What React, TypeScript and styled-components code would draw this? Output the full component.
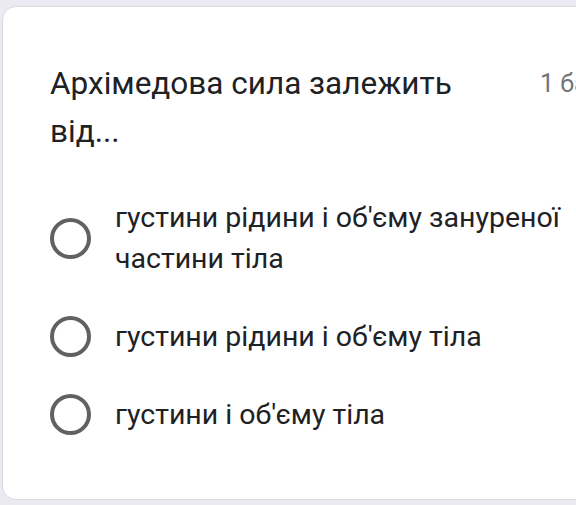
import React from "react";
import styled, { createGlobalStyle } from "styled-components";

const GlobalStyle = createGlobalStyle`
  html, body {
    margin: 0;
    padding: 0;
    background: #ebeaf2;
    font-family: Roboto, "Noto Sans", Arial, sans-serif;
    overflow: hidden;
  }
`;

const Page = styled.div`
  width: 576px;
  height: 505px;
  padding: 6px 0 0 2px;
  box-sizing: border-box;
  overflow: hidden;
`;

const Card = styled.div`
  width: 620px;
  height: 494px;
  box-sizing: border-box;
  background: #fff;
  border: 1px solid #dadce0;
  border-radius: 14px;
  padding: 53px 0 0 47px;
`;

const Header = styled.div`
  display: flex;
  align-items: flex-start;
`;

const Question = styled.div`
  width: 470px;
  font-size: 31.5px;
  line-height: 48px;
  color: #202124;
`;

const Points = styled.div`
  font-size: 25px;
  line-height: 48px;
  color: #70757a;
  white-space: nowrap;
  margin-left: 20px;
`;

const Options = styled.div`
  display: flex;
  flex-direction: column;
  gap: 37px;
  margin-top: 41px;
`;

const Option = styled.label`
  display: flex;
  align-items: center;
  gap: 24px;
`;

const Radio = styled.span`
  width: 41px;
  height: 41px;
  box-sizing: border-box;
  border: 4.5px solid #616161;
  border-radius: 50%;
  flex-shrink: 0;
`;

const OptionText = styled.div`
  font-size: 28.5px;
  line-height: 41px;
  color: #202124;
  width: 470px;
`;

const options = [
  "густини рідини і об'єму зануреної частини тіла",
  "густини рідини і об'єму тіла",
  "густини і об'єму тіла",
];

export default function App() {
  return (
    <Page>
      <GlobalStyle />
      <Card>
        <Header>
          <Question>Архімедова сила залежить від...</Question>
          <Points>1 бал</Points>
        </Header>
        <Options>
          {options.map((o) => (
            <Option key={o}>
              <Radio />
              <OptionText>{o}</OptionText>
            </Option>
          ))}
        </Options>
      </Card>
    </Page>
  );
}
